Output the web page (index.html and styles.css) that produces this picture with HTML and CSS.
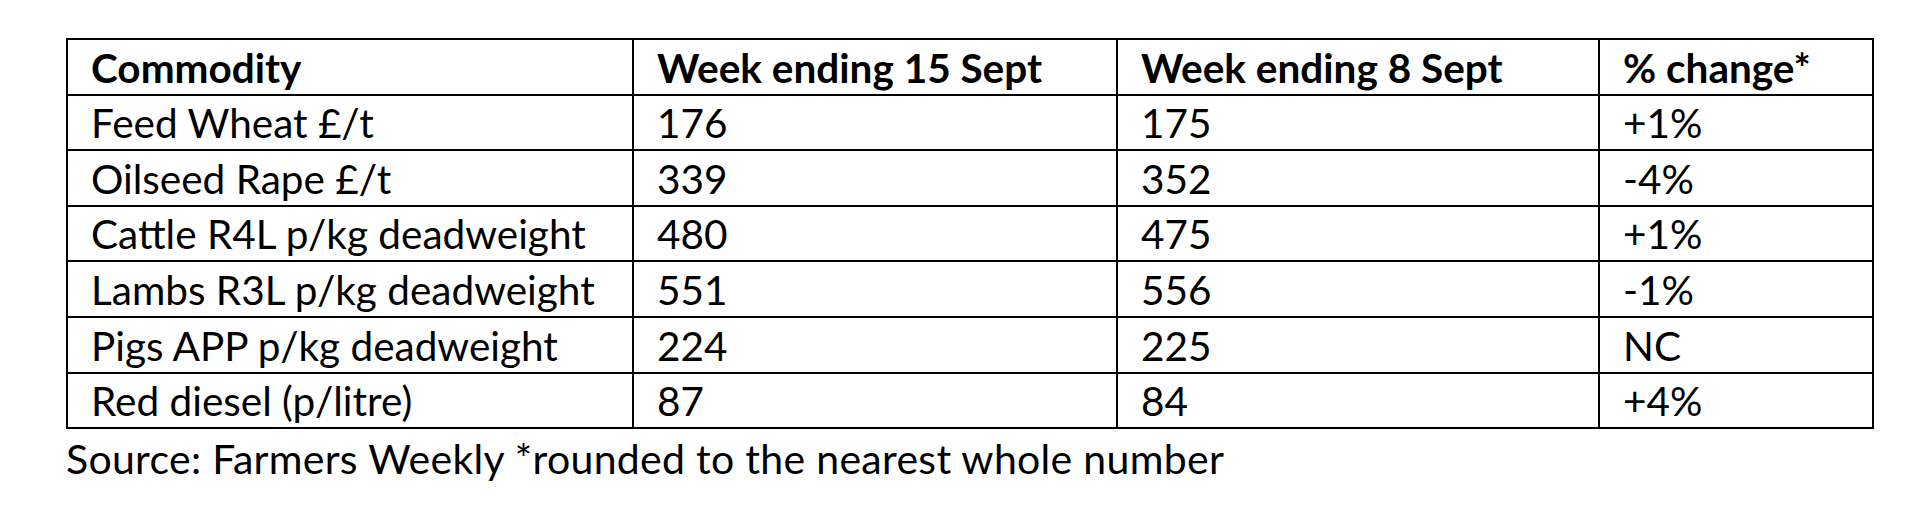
FILE: index.html
```html
<!DOCTYPE html>
<html lang="en">
<head>
<meta charset="utf-8">
<title>Commodity prices</title>
<link rel="stylesheet" href="styles.css">
</head>
<body>
<div class="page">
  <table class="prices">
    <colgroup>
      <col class="c1"><col class="c2"><col class="c3"><col class="c4">
    </colgroup>
    <thead>
      <tr><th>Commodity</th><th>Week ending 15 Sept</th><th>Week ending 8 Sept</th><th>% change*</th></tr>
    </thead>
    <tbody>
      <tr><td>Feed Wheat £/t</td><td>176</td><td>175</td><td>+1%</td></tr>
      <tr><td>Oilseed Rape £/t</td><td>339</td><td>352</td><td>-4%</td></tr>
      <tr><td>Cattle R4L p/kg deadweight</td><td>480</td><td>475</td><td>+1%</td></tr>
      <tr><td>Lambs R3L p/kg deadweight</td><td>551</td><td>556</td><td>-1%</td></tr>
      <tr><td>Pigs APP p/kg deadweight</td><td>224</td><td>225</td><td>NC</td></tr>
      <tr><td>Red diesel (p/litre)</td><td>87</td><td>84</td><td>+4%</td></tr>
    </tbody>
  </table>
  <p class="source">Source: Farmers Weekly *rounded to the nearest whole number</p>
</div>
</body>
</html>
```
FILE: styles.css
```css
html, body {
  margin: 0;
  background: #fff;
}
.page {
  padding: 38px 0 0 66px;
  font-family: Lato, "Open Sans", sans-serif;
  color: #000;
}
.prices {
  border-collapse: collapse;
  width: 1806px;
  table-layout: fixed;
}
.c1 { width: 566px; }
.c2 { width: 484px; }
.c3 { width: 482px; }
.c4 { width: 274px; }
.prices th, .prices td {
  border: 2px solid #000;
  height: 55.6px;
  box-sizing: border-box;
  padding: 2px 0 0 23px;
  text-align: left;
  vertical-align: middle;
  font-size: 40.5px;
  line-height: 1;
  white-space: nowrap;
}
.prices th {
  font-weight: 700;
}
.prices td {
  font-weight: 400;
}
.source {
  margin: 5px 0 0 0;
  font-size: 41px;
  letter-spacing: 0.3px;
  line-height: 1.2;
}
```
